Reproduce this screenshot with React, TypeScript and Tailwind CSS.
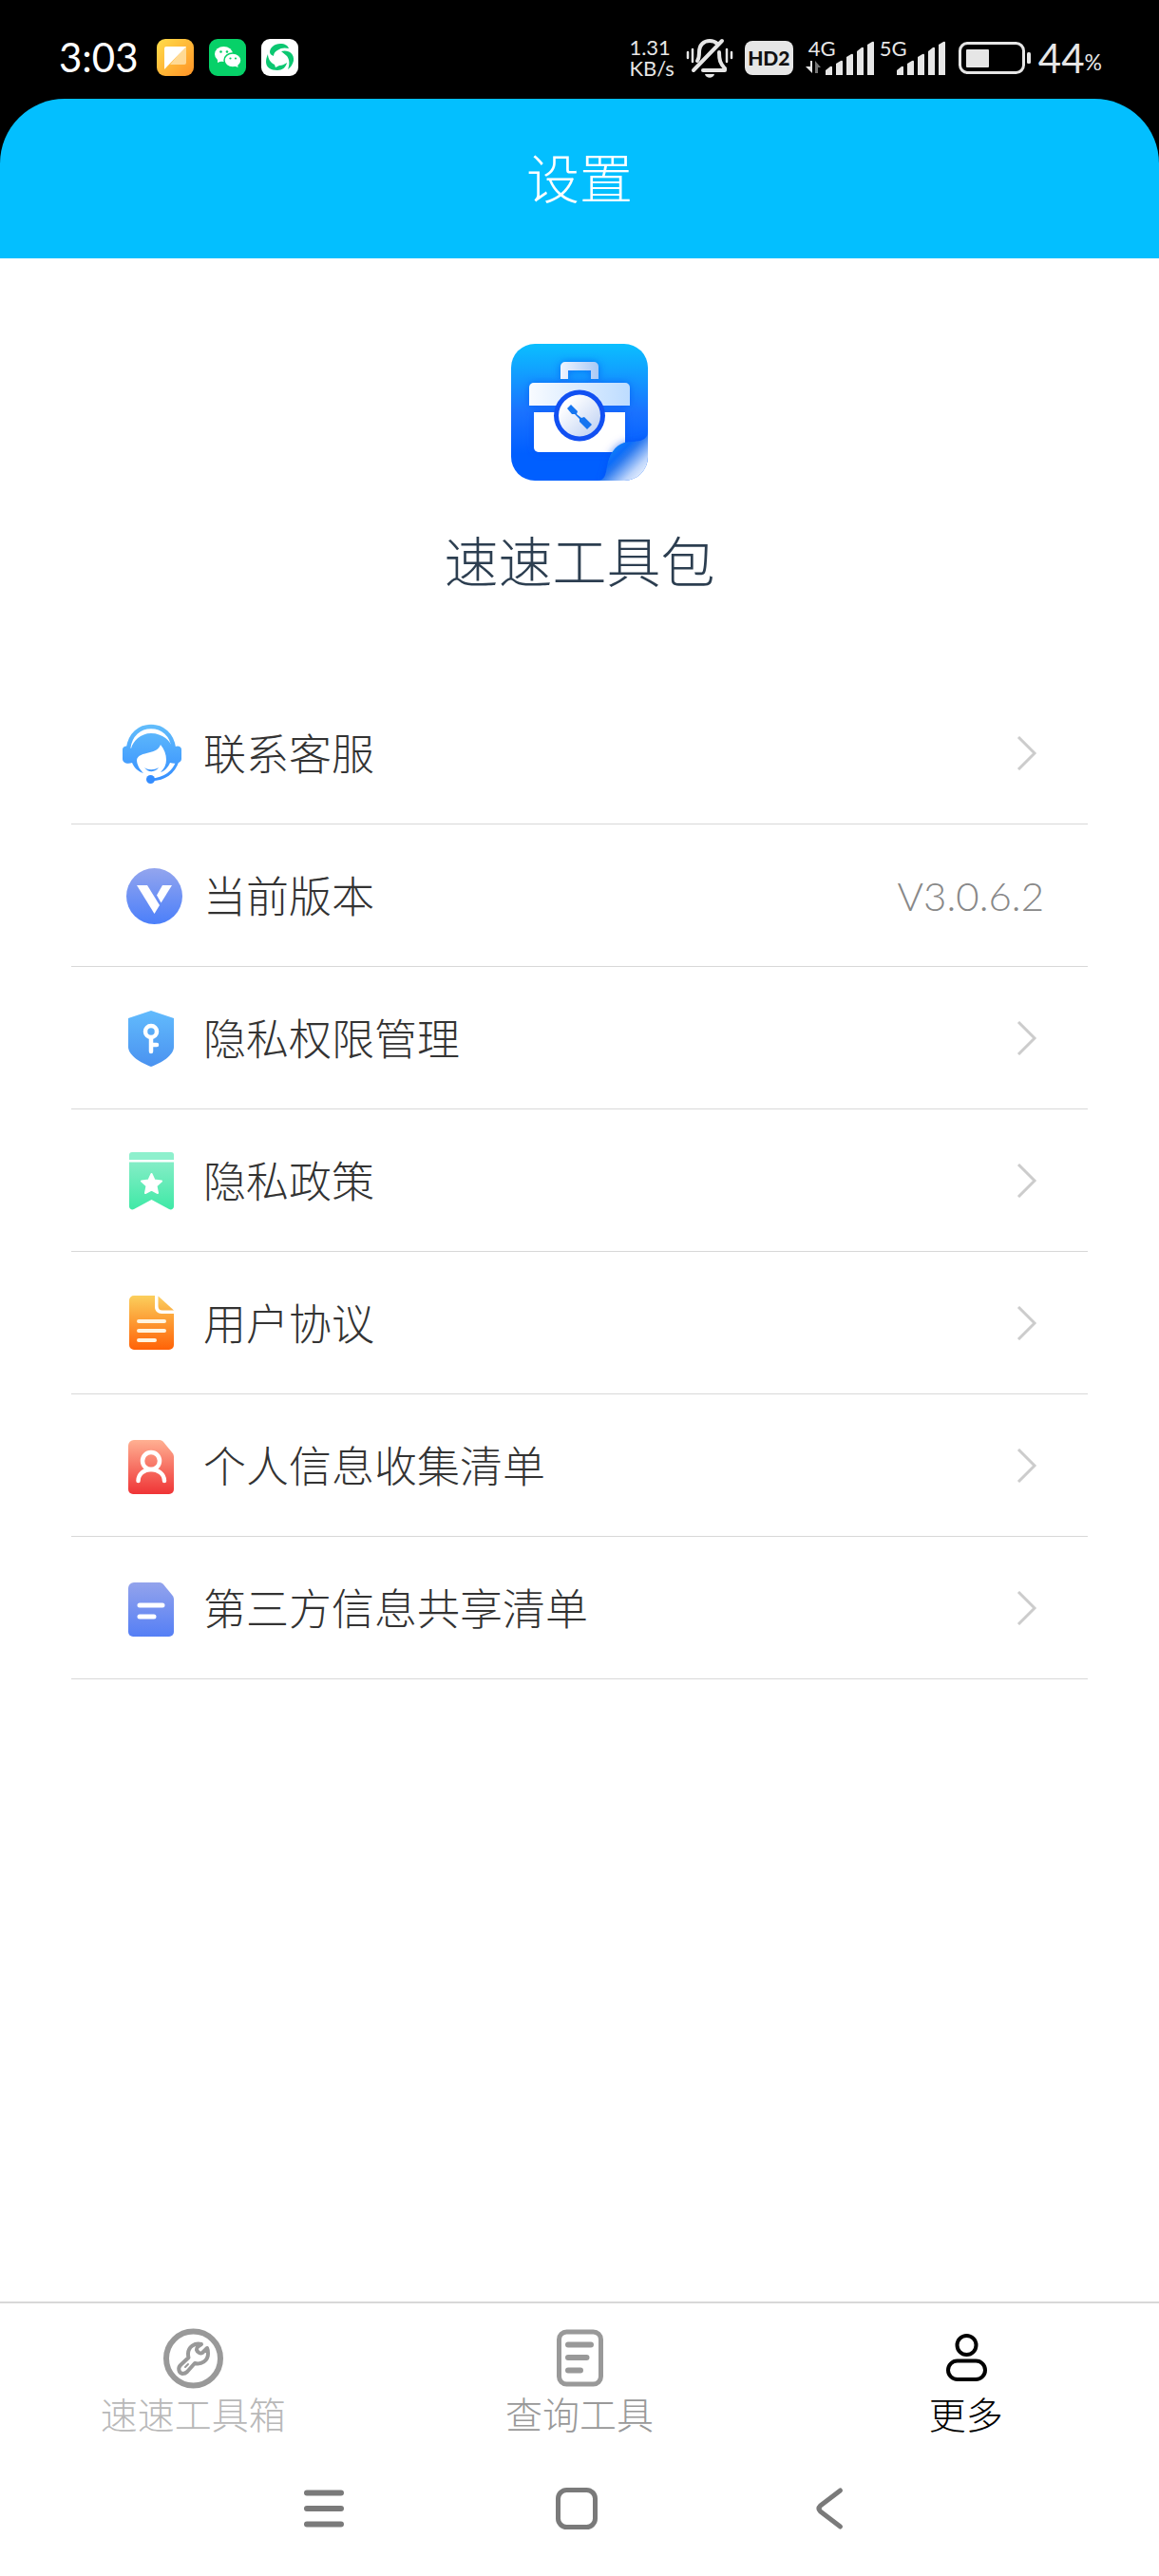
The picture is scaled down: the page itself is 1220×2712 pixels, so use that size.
import type { ReactNode } from 'react'

interface SettingItem {
  label: string
  icon: ReactNode
  value?: string
}

function Gradient({ id, from, to }: { id: string; from: string; to: string }) {
  return (
    <linearGradient id={id} x1="0" y1="0" x2="0" y2="1">
      <stop offset="0" stopColor={from} />
      <stop offset="1" stopColor={to} />
    </linearGradient>
  )
}

const ICON = 'h-16 w-16 shrink-0'

function ServiceIcon() {
  return (
    <svg className={ICON} viewBox="0 0 64 64" fill="none">
      <defs>
        <linearGradient id="service" gradientUnits="userSpaceOnUse" x1="0" y1="2" x2="0" y2="64">
          <stop offset="0" stopColor="#62bdfb" />
          <stop offset="1" stopColor="#348dff" />
        </linearGradient>
      </defs>
      <path d="M7 27C9 12 19 4 31 4s22 8 24 23" stroke="url(#service)" strokeWidth="4.5" />
      <path
        fill="url(#service)"
        d="M31 11C20 11 12 19 10 27c-3-4-9-3-9 1v10c0 4 5 6 10 4 2 5 6 9 12 11-4-4-7-9-7-14 1-5 6-6 14-8 5-1 9-3 11-8 4 5 6 10 6 16 0 5-2 9-6 13 4-1 8-5 10-10 6 2 12 0 12-4V28c0-4-6-5-9-1-2-8-11-16-23-16z"
      />
      <path d="M24 47c4 3 10 3 15 0-3 5-11 6-15 0z" fill="url(#service)" />
      <path d="M59 40C55 52 46 59 31 60" stroke="url(#service)" strokeWidth="3" />
      <circle cx="30.500" cy="59.500" r="4.500" fill="#348dff" />
    </svg>
  )
}

function VersionIcon() {
  return (
    <svg className={ICON} viewBox="0 0 64 64">
      <defs><Gradient id="version" from="#93a5ee" to="#4b7ffa" /></defs>
      <circle cx="34.500" cy="32.500" r="29.500" fill="url(#version)" />
      <path fill="#fff" d="M16 21h11l13 21-5.500 9z" />
      <path fill="#fff" d="M43 21h10L41.500 39.500l-4.500-8z" />
    </svg>
  )
}

function ShieldIcon() {
  return (
    <svg className={ICON} viewBox="0 0 64 64" fill="none">
      <defs><Gradient id="shield" from="#62bbfd" to="#4a92f0" /></defs>
      <path fill="url(#shield)" d="M31 3l24 8v30c0 9-13 17-24 21C20 58 7 50 7 41V11z" />
      <circle cx="31" cy="25" r="6" stroke="#fff" strokeWidth="4.500" />
      <path d="M31 32v14M31 39h6" stroke="#fff" strokeWidth="4.500" strokeLinecap="round" />
    </svg>
  )
}

function BookmarkIcon() {
  return (
    <svg className={ICON} viewBox="0 0 64 64">
      <defs><Gradient id="bookmark" from="#84edc6" to="#3fe9a6" /></defs>
      <path fill="#8ef0cd" d="M11 2h41a3 3 0 0 1 3 3v5H8V5a3 3 0 0 1 3-3z" />
      <path fill="url(#bookmark)" d="M8 12.500h47V59c0 3-3 4-5 3L31.500 52 13 62c-2 1-5 0-5-3z" />
      <path
        fill="#fff"
        stroke="#fff"
        strokeWidth="2"
        strokeLinejoin="round"
        d="M31.500 25l3 6.500 7.500 1-5.500 5 1.500 7.500-6.500-3.500L25 45l1.500-7.500-5.500-5 7.500-1z"
      />
    </svg>
  )
}

function AgreementIcon() {
  return (
    <svg className={ICON} viewBox="0 0 64 64" fill="none">
      <defs>
        <Gradient id="agreement" from="#fbcf5c" to="#ff6207" />
        <Gradient id="corner" from="#fbd065" to="#fbb144" />
      </defs>
      <path fill="url(#agreement)" d="M13 3h22v12c0 4 3 7 7 7h13v33a5 5 0 0 1-5 5H13a5 5 0 0 1-5-5V8a5 5 0 0 1 5-5z" />
      <path fill="url(#corner)" d="M38.500 3.500L55 18.500H43c-3 0-4.500-1.500-4.500-4.500z" />
      <path d="M18 30h27M18 40h27M18 50h17" stroke="#fff4e0" strokeWidth="4" strokeLinecap="round" />
    </svg>
  )
}

function PersonalIcon() {
  return (
    <svg className={ICON} viewBox="0 0 64 64" fill="none">
      <defs><Gradient id="personal" from="#ffb092" to="#ef3436" /></defs>
      <path fill="url(#personal)" d="M13 5h27c2 0 3 1 4 2l9 11c1.500 2 2 3 2 5v34a5 5 0 0 1-5 5H12a5 5 0 0 1-5-5V11a6 6 0 0 1 6-6z" />
      <circle cx="31" cy="27" r="9" stroke="#fff" strokeWidth="4.500" />
      <path d="M17.500 48c0-7 6-12 13.500-12s14 5 14 12" stroke="#fff" strokeWidth="4.500" strokeLinecap="round" />
    </svg>
  )
}

function SharingIcon() {
  return (
    <svg className={ICON} viewBox="0 0 64 64" fill="none">
      <defs><Gradient id="sharing" from="#93a3ec" to="#557ff5" /></defs>
      <path fill="url(#sharing)" d="M13 5h27c2 0 3 1 4 2l9 11c1.500 2 2 3 2 5v34a5 5 0 0 1-5 5H12a5 5 0 0 1-5-5V11a6 6 0 0 1 6-6z" />
      <path d="M19 29h24M19 41h15" stroke="#fff" strokeWidth="5" strokeLinecap="round" />
    </svg>
  )
}

const SETTINGS: SettingItem[] = [
  { label: '联系客服', icon: <ServiceIcon /> },
  { label: '当前版本', icon: <VersionIcon />, value: 'V3.0.6.2' },
  { label: '隐私权限管理', icon: <ShieldIcon /> },
  { label: '隐私政策', icon: <BookmarkIcon /> },
  { label: '用户协议', icon: <AgreementIcon /> },
  { label: '个人信息收集清单', icon: <PersonalIcon /> },
  { label: '第三方信息共享清单', icon: <SharingIcon /> },
]

const TABS = [
  {
    label: '速速工具箱',
    color: 'text-[#b8b8b8]',
    icon: (
      <svg className="h-16 w-16" viewBox="0 0 64 64" fill="none" stroke="#999" strokeLinecap="round" strokeLinejoin="round">
        <circle cx="32.500" cy="32" r="28.500" strokeWidth="6" />
        <path
          strokeWidth="4"
          d="M41 17c-7-2-14 3-14 10 0 2 0 3 .5 4L19 39c-3 3-2 8 2 9 2 0 3 0 5-2l8-9c7 2 14-3 14-10 0-2 0-4-1-6l-5 5c-2 1-5 0-6-3 0-2 0-3 5-6z"
        />
        <path d="M24 41l3-3" strokeWidth="2" />
      </svg>
    ),
  },
  {
    label: '查询工具',
    color: 'text-[#999]',
    icon: (
      <svg className="h-16 w-16" viewBox="0 0 64 64" fill="none" stroke="#999" strokeLinecap="round">
        <rect x="10.500" y="4" width="44" height="55" rx="8" strokeWidth="5" />
        <path d="M20 17.500h24M20 31h19.500M20 44.500h13" strokeWidth="6" />
      </svg>
    ),
  },
  {
    label: '更多',
    color: 'text-black',
    active: true,
    icon: (
      <svg className="h-16 w-16" viewBox="0 0 64 64" fill="none" stroke="#000" strokeWidth="4">
        <circle cx="32.500" cy="18" r="10" />
        <rect x="13" y="34.500" width="39" height="19.500" rx="9.750" />
      </svg>
    ),
  },
]

function NotesAppIcon() {
  return (
    <svg className="h-[39px] w-[39px]" viewBox="0 0 39 39">
      <defs>
        <linearGradient id="notes" x1="0" y1="0" x2="1" y2="1">
          <stop offset="0" stopColor="#ffdd4a" />
          <stop offset="1" stopColor="#ff9326" />
        </linearGradient>
      </defs>
      <rect width="39" height="39" rx="9" fill="url(#notes)" />
      <path fill="#ffe3ad" fillOpacity=".8" d="M30 8h1v17a2 2 0 0 1-2 2H14z" />
      <path fill="#fff" d="M10 8h21L8 32V10a2 2 0 0 1 2-2z" />
    </svg>
  )
}

function WechatAppIcon() {
  return (
    <svg className="h-[39px] w-[39px]" viewBox="0 0 39 39">
      <rect width="39" height="39" rx="9" fill="#06d168" />
      <ellipse cx="15.500" cy="16" rx="9.500" ry="8" fill="#fff" />
      <path fill="#fff" d="M9 20l0 5 5-2z" />
      <ellipse cx="25" cy="22.500" rx="9" ry="7.500" fill="#fff" stroke="#06d168" strokeWidth="1.500" />
      <path fill="#fff" d="M26 28l4.500 2-.5-4z" />
      <g fill="#06d168">
        <circle cx="12.500" cy="13.500" r="1.300" />
        <circle cx="19" cy="13.500" r="1.300" />
        <circle cx="22.500" cy="20.500" r="1.100" />
        <circle cx="28" cy="20.500" r="1.100" />
      </g>
    </svg>
  )
}

function SwirlAppIcon() {
  return (
    <svg className="h-[39px] w-[39px]" viewBox="0 0 39 39">
      <rect width="39" height="39" rx="9" fill="#fff" />
      <g fill="#0bc771">
        <path d="M9 14C9 9 14 5 20 5c5 0 8 2 9 5-4-1-8-1-12 2-2 1-4 3-4 6-2-1-4-2-4-4z" />
        <path d="M21 13c7-2 14 2 13 10-1 4-3 7-6 9 2-5 2-10-1-14-2-2-4-3-6-5z" />
        <path d="M7 16c0 5 3 9 7 11l1 3 4-2c3 0 5-1 8-3-1 5-5 8-10 8C10 33 5 30 5 24c0-3 1-6 2-8z" />
      </g>
    </svg>
  )
}

function MutedBellIcon() {
  return (
    <svg className="h-[42px] w-[50px]" viewBox="0 0 50 42" fill="none" stroke="#e6e6e6" strokeWidth="4" strokeLinecap="round" strokeLinejoin="round">
      <path d="M12 24c2-3 2-6 2-9C14 7 19 3 25 3c3 0 6 1 8 3" />
      <path d="M35 15c0 8 1 12 6 17v2H18" />
      <path d="M38 3L8 34" />
      <path d="M2 15v6M7 12v13M43 12v13M48 15v6" strokeWidth="2.500" />
      <path d="M20 38h10c-1 5-9 5-10 0z" fill="#e6e6e6" stroke="none" />
    </svg>
  )
}

function Signal({ label, arrows }: { label: string; arrows?: boolean }) {
  return (
    <div className="relative h-[38px] w-[75px]">
      <span className="absolute left-1 top-0 text-[22px] leading-[18px]">{label}</span>
      <svg className="h-[38px] w-[75px]" viewBox="0 0 75 38" fill="#e6e6e6">
        {arrows && (
          <>
            <path d="M6 22h2v13L1 28h5z" />
            <path d="M11 22l6 7h-3v6h-3z" fill="#777" />
          </>
        )}
        <path d="M22 32l5-4q2-1 2 1v8h-7z" />
        <path d="M33 25l5-3q2-1 2 1v14h-7z" />
        <path d="M44 18l5-3q2-1 2 1v21h-7z" />
        <path d="M55 12l5-4q2-1 2 1v28h-7z" />
        <path d="M66 5l5-3q2-1 2 1v34h-7z" />
      </svg>
    </div>
  )
}

function StatusBar() {
  return (
    <div className="flex h-[104px] items-start justify-between bg-black pl-[62px] pr-[60px] pt-10 font-normal text-[#e6e6e6]">
      <div className="flex items-center">
        <time className="w-[103px] text-[42px] leading-10 text-white">3:03</time>
        <div className="flex gap-4">
          <NotesAppIcon />
          <WechatAppIcon />
          <SwirlAppIcon />
        </div>
      </div>
      <div className="flex h-[42px] items-center">
        <div className="mr-3 text-[22px] leading-[22px]">
          <div>1.31</div>
          <div>KB/s</div>
        </div>
        <MutedBellIcon />
        <span className="mx-3 flex h-9 w-[51px] items-center justify-center rounded-lg bg-[#e6e6e6] text-[21px] font-black text-[#111]">
          HD2
        </span>
        <Signal label="4G" arrows />
        <Signal label="5G" />
        <svg className="ml-3 h-[34px] w-[76px]" viewBox="0 0 76 34" fill="none">
          <rect x="1.500" y="1.500" width="67" height="31" rx="8" stroke="#e6e6e6" strokeWidth="3" />
          <rect x="8" y="8" width="24" height="19" rx="1" fill="#e6e6e6" />
          <rect x="72" y="11" width="4" height="12" rx="1.500" fill="#e6e6e6" />
        </svg>
        <span className="ml-2 text-[42px] leading-10">44</span>
        <span className="pt-2 text-[23px] leading-8">%</span>
      </div>
    </div>
  )
}

function AppLogo() {
  return (
    <svg className="h-36 w-36" viewBox="0 0 144 144">
      <defs>
        <linearGradient id="logoBg" x1="0" y1="0" x2="0" y2="1">
          <stop offset="0" stopColor="#0bbfff" />
          <stop offset=".5" stopColor="#1a72ff" />
          <stop offset=".8" stopColor="#005fff" />
        </linearGradient>
        <linearGradient id="lid" x1="0" y1="0" x2="1" y2="0">
          <stop offset="0" stopColor="#f8fbff" />
          <stop offset="1" stopColor="#bddcff" />
        </linearGradient>
        <linearGradient id="handle" x1="0" y1="0" x2="1" y2="0">
          <stop offset="0" stopColor="#eef4ff" />
          <stop offset="1" stopColor="#a9c9f5" />
        </linearGradient>
        <linearGradient id="dial" x1="0" y1="0" x2="1" y2="1">
          <stop offset=".2" stopColor="#fff" />
          <stop offset="1" stopColor="#b9cdf2" />
        </linearGradient>
        <linearGradient id="fold" gradientUnits="userSpaceOnUse" x1="104" y1="108" x2="138" y2="142">
          <stop offset="0" stopColor="#1a8bf5" />
          <stop offset=".25" stopColor="#0a6cfa" />
          <stop offset=".4" stopColor="#2f7cf0" />
          <stop offset=".75" stopColor="#bcd4fb" />
          <stop offset="1" stopColor="#f2f7ff" />
        </linearGradient>
        <filter id="glow" x="-20%" y="-20%" width="140%" height="140%">
          <feDropShadow dx="0" dy="0" stdDeviation="4" floodColor="#0a48f0" floodOpacity=".6" />
        </filter>
        <clipPath id="logoClip"><rect width="144" height="144" rx="25" /></clipPath>
      </defs>
      <g clipPath="url(#logoClip)">
        <rect width="144" height="144" fill="url(#logoBg)" />
        <g filter="url(#glow)">
          <path fill="url(#handle)" d="M52 37V24a5 5 0 0 1 5-5h30a5 5 0 0 1 5 5v13h-8v-9H60v9z" />
          <path fill="url(#lid)" d="M24 41h96a5 5 0 0 1 5 5v19H19V46a5 5 0 0 1 5-5z" />
          <path fill="#fff" d="M24 72h96v42H29a5 5 0 0 1-5-5z" />
        </g>
        <circle cx="72" cy="75.500" r="27" fill="#1150f2" />
        <circle cx="72" cy="75.500" r="22" fill="url(#dial)" />
        <path fill="#1575f0" d="M63 64l7 7-1 3 5 4 3-1 8 8-5 5-8-8 0-3-5-5-3 0-5-6z" />
        <path
          fill="url(#fold)"
          filter="url(#glow)"
          d="M92 144c8-1 8-10 9-15 2-12 8-22 18-25 9-2 25 1 25-12v52z"
        />
      </g>
    </svg>
  )
}

function SettingRow({ label, icon, value }: SettingItem) {
  const content = (
    <>
      {icon}
      <span className="ml-[22px] flex-1 pt-[2px] text-left text-[45px] leading-[64px] text-[#333]">{label}</span>
      {value ? (
        <span className="text-[42px] leading-[64px] text-[#888]">{value}</span>
      ) : (
        <svg className="h-9 w-9" viewBox="0 0 36 36" fill="none" stroke="#ccc" strokeWidth="3">
          <path d="M9 1l17 17L9 35" />
        </svg>
      )}
    </>
  )
  return (
    <li className="h-[150px] border-b border-[#d8d8d8]">
      {value ? (
        <div className="flex h-full items-center pl-[53px] pr-[46px]">{content}</div>
      ) : (
        <button className="flex h-full w-full items-center pl-[53px] pr-[46px]">{content}</button>
      )}
    </li>
  )
}

export default function App() {
  return (
    <div className="flex min-h-screen flex-col bg-white font-['Lato','Noto_Sans_CJK_SC',sans-serif] font-light" lang="zh-CN">
      <div className="bg-black">
        <StatusBar />
        <header className="flex h-[168px] items-center justify-center rounded-t-[68px] bg-[#03bfff]">
          <h1 className="text-[56px] leading-[64px] text-white">设置</h1>
        </header>
      </div>

      <main className="flex-1">
        <div className="flex flex-col items-center pt-[90px]">
          <AppLogo />
          <h2 className="mt-[53px] text-[57px] leading-[64px] text-[#2c3e50]">速速工具包</h2>
        </div>
        <ul className="mx-[75px] mt-[95px]">
          {SETTINGS.map(item => (
            <SettingRow key={item.label} {...item} />
          ))}
        </ul>
      </main>

      <nav className="grid grid-cols-3 border-t-2 border-[#d8d8d8] pb-2 pt-[26px]">
        {TABS.map(tab => (
          <button key={tab.label} className="flex flex-col items-center gap-[7px]" aria-current={tab.active ? 'page' : undefined}>
            {tab.icon}
            <span className={`text-[39px] leading-10 ${tab.color}`}>{tab.label}</span>
          </button>
        ))}
      </nav>

      <div className="grid h-[142px] grid-cols-3 items-center justify-items-center pl-[208px] pr-[214px]">
        <button aria-label="最近任务">
          <svg className="h-12 w-12" viewBox="0 0 48 48" stroke="#7a7a7a" strokeWidth="6" strokeLinecap="round">
            <path d="M6 7.500h36M6 24h36M6 40.500h36" />
          </svg>
        </button>
        <button aria-label="主屏幕">
          <svg className="h-12 w-12" viewBox="0 0 48 48" fill="none" stroke="#7a7a7a" strokeWidth="5">
            <rect x="4.500" y="4.500" width="39" height="39" rx="9" />
          </svg>
        </button>
        <button aria-label="返回">
          <svg className="h-12 w-12" viewBox="0 0 48 48" fill="none" stroke="#7a7a7a" strokeWidth="5" strokeLinecap="round" strokeLinejoin="round">
            <path d="M35.500 5L14.500 21q-3 3 0 6l21 16" />
          </svg>
        </button>
      </div>
    </div>
  )
}
